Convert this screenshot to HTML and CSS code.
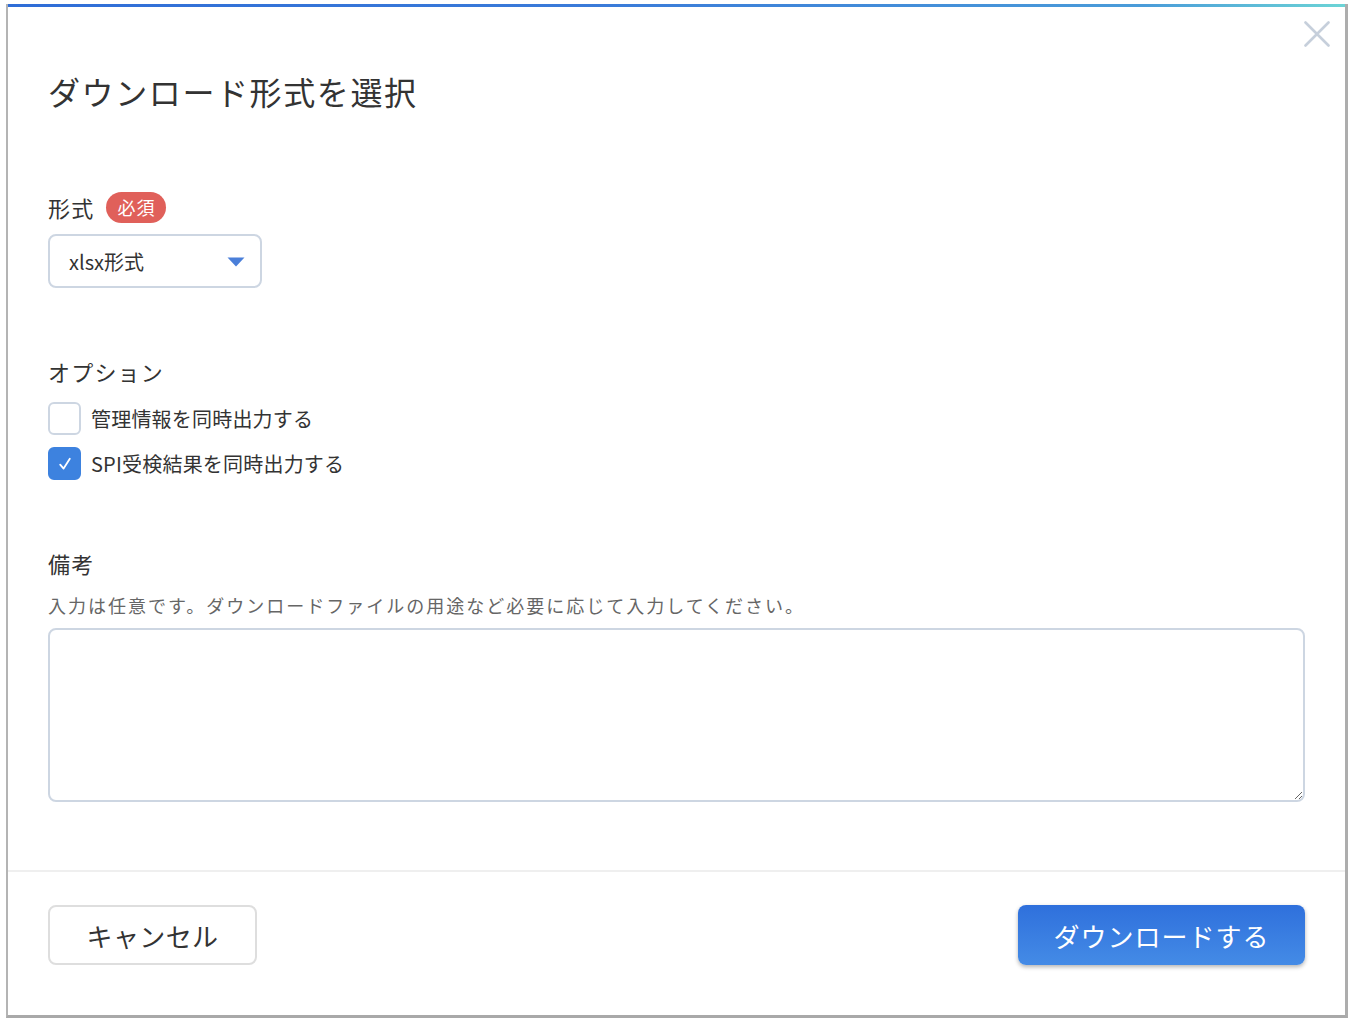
FILE: index.html
```html
<!DOCTYPE html>
<html lang="ja">
<head>
<meta charset="utf-8">
<title>ダウンロード形式を選択</title>
<link rel="stylesheet" href="styles.css">
</head>
<body>
<div class="page">
  <div class="modal">
    <div class="topbar"></div>
    <button class="close" aria-label="閉じる">
      <svg width="26" height="26" viewBox="0 0 26 26"><path d="M1.5 1.5 L24.5 24.5 M24.5 1.5 L1.5 24.5" stroke="#c6cfdb" stroke-width="2.6" stroke-linecap="round" fill="none"/></svg>
    </button>
    <div class="body">
      <h1 class="title">ダウンロード形式を選択</h1>

      <div class="label-row">
        <span class="label">形式</span>
        <span class="badge">必須</span>
      </div>
      <div class="select">
        <span class="select-text">xlsx形式</span>
        <svg class="caret" width="18" height="10" viewBox="0 0 18 10"><path d="M0.5 0.5 H17.5 L9 9.5 Z" fill="#4a7fd9"/></svg>
      </div>

      <div class="label options-label">オプション</div>
      <div class="check-list">
        <label class="check-row">
          <span class="box"></span>
          <span class="check-text">管理情報を同時出力する</span>
        </label>
        <label class="check-row">
          <span class="box checked">
            <svg width="16" height="16" viewBox="0 0 16 16"><path d="M3.2 8.6 L6.6 12.6 L12.8 2.8" stroke="#fff" stroke-width="1.8" fill="none" stroke-linecap="round" stroke-linejoin="round"/></svg>
          </span>
          <span class="check-text">SPI受検結果を同時出力する</span>
        </label>
      </div>

      <div class="label notes-label">備考</div>
      <p class="help">入力は任意です。ダウンロードファイルの用途など必要に応じて入力してください。</p>
      <textarea class="notes"></textarea>
    </div>
    <div class="footer">
      <button class="btn btn-cancel">キャンセル</button>
      <button class="btn btn-primary">ダウンロードする</button>
    </div>
  </div>
</div>
</body>
</html>
```
FILE: styles.css
```css
* { box-sizing: border-box; }
html, body { margin: 0; padding: 0; background: #fff; }
body {
  font-family: "Noto Sans CJK JP", "Noto Sans", "Liberation Sans", sans-serif;
  color: #333;
}
.page {
  padding: 4px 0 0 6px;
}
.modal {
  position: relative;
  width: 1342px;
  height: 1014px;
  background: #fff;
  border-left: 2px solid #b4b4b4;
  border-right: 3px solid #adadad;
  border-bottom: 3px solid #a9a9a9;
  display: flex;
  flex-direction: column;
}
.topbar {
  height: 3px;
  background: linear-gradient(to right, #2f6dd7 0%, #3a7bd9 45%, #4a9cd9 85%, #6cd4d6 100%);
}
.close {
  position: absolute;
  top: 15px;
  right: 13px;
  width: 30px;
  height: 30px;
  padding: 2px;
  border: 0;
  background: transparent;
}
.body {
  padding: 60px 40px 0 40px;
}
.title {
  margin: 0;
  font-size: 32px;
  line-height: 48px;
  font-weight: 400;
  letter-spacing: 1.6px;
  color: #333;
}
.label-row {
  margin-top: 77px;
  display: flex;
  align-items: center;
  gap: 12px;
  height: 31px;
}
.label {
  font-size: 22px;
  line-height: 33px;
  letter-spacing: 1.2px;
  color: #333;
}
.badge {
  height: 31px;
  padding: 0 11px;
  border-radius: 16px;
  background: #e0605a;
  color: #fff;
  font-size: 18px;
  line-height: 31px;
  letter-spacing: 1px;
}
.select {
  margin-top: 11px;
  width: 214px;
  height: 54px;
  border: 2px solid #cdd6e2;
  border-radius: 8px;
  display: flex;
  align-items: center;
  justify-content: space-between;
  padding: 0 15px 0 19px;
}
.select-text {
  font-size: 20px;
  color: #333;
}
.caret { margin-top: 1px; }
.options-label {
  margin-top: 67px;
}
.check-list {
  margin-top: 14px;
  display: flex;
  flex-direction: column;
  gap: 12px;
}
.check-row {
  display: flex;
  align-items: center;
  gap: 10px;
  height: 33px;
}
.box {
  width: 33px;
  height: 33px;
  border: 2px solid #cdd6e2;
  border-radius: 6px;
  background: #fff;
  display: flex;
  align-items: center;
  justify-content: center;
}
.box.checked {
  background: #3d82df;
  border-color: #3d82df;
}
.check-text {
  font-size: 20px;
  letter-spacing: 0.2px;
  color: #333;
}
.notes-label {
  margin-top: 67px;
}
.help {
  margin: 12px 0 0 0;
  font-size: 18px;
  line-height: 27px;
  letter-spacing: 2px;
  color: #666;
}
.notes {
  display: block;
  margin-top: 9px;
  width: 1257px;
  height: 174px;
  border: 2px solid #cdd6e2;
  border-radius: 8px;
  resize: vertical;
  font-family: inherit;
  font-size: 18px;
}
.footer {
  margin-top: 68px;
  border-top: 2px solid #efefef;
  padding: 33px 40px 0 40px;
  display: flex;
  justify-content: space-between;
  align-items: flex-start;
}
.btn {
  height: 60px;
  border-radius: 8px;
  font-family: inherit;
  font-size: 26px;
  cursor: pointer;
}
.btn-cancel {
  width: 209px;
  background: #fff;
  border: 2px solid #dedede;
  color: #333;
  letter-spacing: 0.4px;
}
.btn-primary {
  width: 287px;
  border: 0;
  color: #fff;
  letter-spacing: 1px;
  background: linear-gradient(to bottom, #2f70dc, #448be6);
  box-shadow: 0 2px 4px rgba(0, 0, 0, 0.3);
}
```
